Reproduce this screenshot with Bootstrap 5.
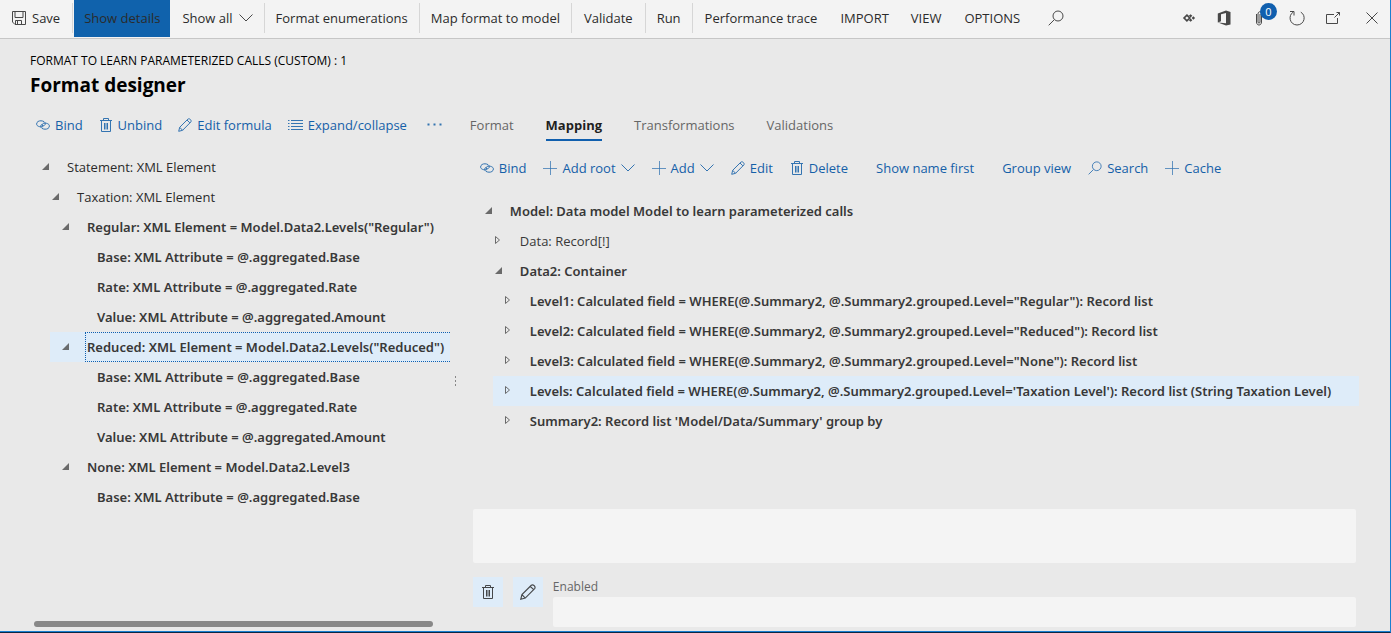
<!DOCTYPE html>
<html lang="en">
<head>
<meta charset="utf-8">
<meta name="viewport" content="width=device-width, initial-scale=1">
<title>Format designer</title>
<link href="https://cdn.jsdelivr.net/npm/bootstrap@5.3.0/dist/css/bootstrap.min.css" rel="stylesheet">
<style>
  body { font-family: "Open Sans", "Noto Sans", sans-serif; font-size: 13px; line-height: 20px; color: #2b2b2b; background: #e9e9e9; }
  button { font: inherit; color: inherit; background: none; border: 0; padding: 0; white-space: nowrap; }
  svg { display: block; flex: none; fill: none; stroke: currentColor; opacity: .85; }
  .shell { border-right: 1px solid #1a7fd0; border-bottom: 1px solid #0a2744; }
  .topbar { background: #f3f3f3; border-bottom: 1px solid #c6c6c6; height: 39px; padding-bottom: 2px; }
  .topbar .cmd { height: 30px; padding: 0 11px; display: flex; align-items: center; gap: 6px; }
  .topbar .ruled { border-right: 1px solid #d6d6d6; }
  .topbar .cmd.active { background: #1062ac; height: 37px; padding: 0 10px; margin: 0 1px; }
  .topbar .menu { padding: 0 12px; }
  .sysicons { gap: 20px; padding-right: 11px; }
  .sysicons button { position: relative; }
  .counter { position: absolute; left: 5px; top: -7px; width: 17px; height: 17px; border-radius: 50%; background: #105fae; color: #fff; font-size: 11px; line-height: 17px; text-align: center; }
  .titles { padding: 12px 30px 0; }
  .caption-line { font-size: 12px; color: #000; }
  .heading { font-size: 19px; line-height: 28px; font-weight: 700; color: #000; }
  .work { display: grid; grid-template-columns: minmax(0, 17fr) 20px minmax(0, 36fr); padding: 12px 31px 0 30px; border-bottom: 1px solid #1a7fd0; }
  .tools { color: #1560a8; gap: 16px; height: 24px; white-space: nowrap; }
  .tools button { display: flex; align-items: center; gap: 5px; }
  .tools .plain { padding-left: 11px; }
  .format-pane { padding-top: 2px; }
  .format-pane .tools { margin: 0 0 15px 6px; }
  .source-pane .tools { gap: 17px; margin: 15px 0 16px 10px; }
  .source-pane .tree { margin-left: 3px; }
  .tabs { gap: 32px; height: 30px; }
  .tabs button { height: 30px; color: #666; border-bottom: 2px solid transparent; }
  .tabs .active { font-weight: 700; color: #1f1f1f; border-color: #105fae; }
  .tree ul { list-style: none; margin: 0; padding-left: 10px; }
  .tree > ul { padding-left: 0; }
  .tree .node { display: flex; align-items: center; height: 30px; padding-left: 12px; white-space: nowrap; }
  .tree .node button { width: 23px; height: 14px; color: #555; }
  .tree .leaf { padding-left: 35px; }
  .tree .node span { padding-left: 2px; height: 30px; line-height: 30px; }
  .tree .bound { font-family: "Noto Sans", "Open Sans", sans-serif; font-weight: 600; color: #383838; }
  .tree .unbound { font-family: "Open Sans", "Noto Sans", sans-serif; font-weight: 400; }
  .tree .picked { background: #deecf9; }
  .tree .focused span { flex: 1 0 auto; border: 1px dotted #105fae; border-right: 0; padding-left: 1px; line-height: 28px; }
  .splitter { padding: 20px 0 0 4px; }
  .hbar { height: 6px; width: 95%; border-radius: 3px; background: #888; margin: 0 0 4px 4px; }
  .field { border: 0; border-radius: 2px; background: #f4f4f4; display: block; width: 100%; height: 30px; resize: none; }
  .formula { height: 54px; }
  .tile { width: 30px; height: 30px; background: #deecf9; display: flex; align-items: center; justify-content: center; }
  .lower { padding: 0 3px 4px; }
  .lower label { font-size: 12px; color: #666; }
  .lower-row { gap: 10px; margin-top: 14px; }
</style>
</head>
<body>
<svg width="0" height="0" class="position-absolute" aria-hidden="true">
  <symbol id="save" viewBox="0 0 14 14"><path d="M1 .5h12.500v13H3l-2.500-2.500V.5zM3 .5v6h8v-6M3.500 13V9.500h6V13M5.500 10v3"/></symbol>
  <symbol id="chev" viewBox="0 0 14 14"><path d="M.5 3.500 7 10l6.500-6.500"/></symbol>
  <symbol id="lens" viewBox="0 0 16 16"><circle cx="10" cy="6" r="5"/><path d="M6.300 9.700.7 15.300"/></symbol>
  <symbol id="link" viewBox="0 0 14 14"><path d="M7.200 8.600C4 9.300.6 8.300.6 6S3 2.700 5 2.800c2.400.1 4.300 1.200 4.300 3 0 1.400-1.300 1.900-2.300 1.900-.8 0-1.400-.3-1.400-1"/><path d="M6.800 5.400c3.200-.8 6.600.3 6.600 2.600s-2.400 3.300-4.400 3.200c-2.400-.1-4.300-1.200-4.300-3 0-1.300 1.200-1.900 2.300-1.900"/></symbol>
  <symbol id="bin" viewBox="0 0 14 14"><path d="M1 2.500h12M4.500 2.500V.5h5v2M2.500 2.500v11h9v-11M5.500 5v6.500M7 5v6.500M8.500 5v6.500"/></symbol>
  <symbol id="pen" viewBox="0 0 14 14"><path d="m.7 13.300 1-4L9.900 1.100c1.600-1.200 4.100 1.300 2.900 2.900L4.600 12.300zM1.700 9.300l2.900 3M9 2l2.900 2.900"/></symbol>
  <symbol id="rows" viewBox="0 0 15 14"><path d="M3 2.500h12M3 5.500h12M3 8.500h12M3 11.500h12M0 2.500h1.500M0 5.500h1.500M0 8.500h1.500M0 11.500h1.500"/></symbol>
  <symbol id="plus" viewBox="0 0 14 14"><path d="M7.500 0v14M0 7.500h14" opacity=".75"/></symbol>
  <symbol id="open" viewBox="0 0 8 8"><path d="M7 0v7H0z" fill="currentColor" stroke="none"/></symbol>
  <symbol id="shut" viewBox="0 0 8 10"><path d="M.5.500v7l4-3.500z"/></symbol>
</svg>
<div class="shell d-flex flex-column min-vh-100">
  <header class="topbar d-flex align-items-center justify-content-between">
    <nav class="d-flex align-items-center" aria-label="Actions">
      <button class="cmd menu ruled"><svg width="14" height="14"><use href="#save"/></svg>Save</button>
      <button class="cmd active">Show details</button>
      <button class="cmd ruled">Show all<svg width="14" height="14"><use href="#chev"/></svg></button>
      <button class="cmd ruled">Format enumerations</button>
      <button class="cmd ruled">Map format to model</button>
      <button class="cmd menu ruled">Validate</button>
      <button class="cmd ruled">Run</button>
      <button class="cmd menu">Performance trace</button>
      <button class="cmd">IMPORT</button>
      <button class="cmd">VIEW</button>
      <button class="cmd menu">OPTIONS</button>
      <button class="cmd menu ms-1" aria-label="Search"><svg width="16" height="16"><use href="#lens"/></svg></button>
    </nav>
    <div class="sysicons d-flex align-items-center">
      <button aria-label="Power Apps"><svg width="15" height="12" viewBox="0 0 17 14" stroke-width="2"><path d="m5.500 3.700 3.300 3.300-3.300 3.300L2.200 7z"/><path d="m9.800 2.500 2 2-2 2-2-2zM9.800 7.500l2 2-2 2-2-2zM13 5l2 2-2 2-2-2z" fill="currentColor" stroke="none"/></svg></button>
      <button aria-label="Office"><svg width="14" height="16" viewBox="0 0 14 16"><path d="M9 .5 13.500 2v12.500L9 15.500l-8-3 8 .8V3L4 4.200v7L.8 12.500v-9z" fill="currentColor" stroke="none"/></svg></button>
      <button class="ms-1" aria-label="Attachments"><svg width="14" height="16" viewBox="0 0 14 16"><path d="M1.500 4v8c0 4 5 4 5 0V4c0-3-3.500-3-3.500 0v8c0 1.500 2 1.500 2 0V4"/></svg><span class="counter">0</span></button>
      <button aria-label="Refresh"><svg width="16" height="16" viewBox="0 0 16 16"><path d="M4.200 2.200C-1 5 .3 14.800 8 15c8-.2 9.300-10 3.800-12.800M1 1.500h4v4"/></svg></button>
      <button aria-label="Open in new window"><svg width="16" height="14" viewBox="0 0 16 14"><path d="M9 3.500H1.500v9h11V7M9.500 6.500l5-5M11.500 1.500h3v3"/></svg></button>
      <button class="ms-1" aria-label="Close"><svg width="14" height="14" viewBox="0 0 14 14"><path d="m1.500 1.500 11 11m0-11-11 11"/></svg></button>
    </div>
  </header>

  <div class="titles">
    <div class="caption-line">FORMAT TO LEARN PARAMETERIZED CALLS (CUSTOM) : 1</div>
    <h1 class="heading mb-0">Format designer</h1>
  </div>

  <main class="work flex-grow-1">
    <section class="format-pane d-flex flex-column overflow-hidden">
      <div class="tools d-flex align-items-center">
        <button><svg width="14" height="14"><use href="#link"/></svg>Bind</button>
        <button><svg width="14" height="14"><use href="#bin"/></svg>Unbind</button>
        <button><svg width="14" height="14"><use href="#pen"/></svg>Edit formula</button>
        <button><svg width="15" height="14"><use href="#rows"/></svg>Expand/collapse</button>
        <button class="ms-1" aria-label="More"><svg width="15" height="14" viewBox="0 0 15 14"><path d="M.5 6.500h2M6.500 6.500h2M12.500 6.500h2" stroke-width="2"/></svg></button>
      </div>
      <div class="tree flex-grow-1">
        <ul>
          <li><div class="node"><button aria-label="Collapse"><svg width="8" height="8"><use href="#open"/></svg></button><span>Statement: XML Element</span></div>
            <ul>
              <li><div class="node"><button aria-label="Collapse"><svg width="8" height="8"><use href="#open"/></svg></button><span>Taxation: XML Element</span></div>
                <ul class="bound">
                  <li><div class="node"><button aria-label="Collapse"><svg width="8" height="8"><use href="#open"/></svg></button><span>Regular: XML Element = Model.Data2.Levels("Regular")</span></div>
                    <ul>
                      <li><div class="node leaf"><span>Base: XML Attribute = @.aggregated.Base</span></div></li>
                      <li><div class="node leaf"><span>Rate: XML Attribute = @.aggregated.Rate</span></div></li>
                      <li><div class="node leaf"><span>Value: XML Attribute = @.aggregated.Amount</span></div></li>
                    </ul>
                  </li>
                  <li><div class="node picked focused"><button aria-label="Collapse"><svg width="8" height="8"><use href="#open"/></svg></button><span>Reduced: XML Element = Model.Data2.Levels("Reduced")</span></div>
                    <ul>
                      <li><div class="node leaf"><span>Base: XML Attribute = @.aggregated.Base</span></div></li>
                      <li><div class="node leaf"><span>Rate: XML Attribute = @.aggregated.Rate</span></div></li>
                      <li><div class="node leaf"><span>Value: XML Attribute = @.aggregated.Amount</span></div></li>
                    </ul>
                  </li>
                  <li><div class="node"><button aria-label="Collapse"><svg width="8" height="8"><use href="#open"/></svg></button><span>None: XML Element = Model.Data2.Level3</span></div>
                    <ul>
                      <li><div class="node leaf"><span>Base: XML Attribute = @.aggregated.Base</span></div></li>
                    </ul>
                  </li>
                </ul>
              </li>
            </ul>
          </li>
        </ul>
      </div>
      <div class="hbar"></div>
    </section>

    <div class="splitter d-flex align-items-center"><svg width="3" height="12" viewBox="0 0 3 12" color="#777"><path d="M1.500 1v2M1.500 5v2M1.500 9v2"/></svg></div>

    <section class="source-pane d-flex flex-column">
      <div class="tabs d-flex" role="tablist">
        <button role="tab">Format</button>
        <button role="tab" class="active" aria-selected="true">Mapping</button>
        <button role="tab">Transformations</button>
        <button role="tab">Validations</button>
      </div>
      <div class="tools d-flex align-items-center">
        <button><svg width="14" height="14"><use href="#link"/></svg>Bind</button>
        <button><svg width="14" height="14"><use href="#plus"/></svg>Add root<svg width="14" height="14"><use href="#chev"/></svg></button>
        <button><svg width="14" height="14"><use href="#plus"/></svg>Add<svg width="14" height="14"><use href="#chev"/></svg></button>
        <button><svg width="14" height="14"><use href="#pen"/></svg>Edit</button>
        <button><svg width="14" height="14"><use href="#bin"/></svg>Delete</button>
        <button class="plain">Show name first</button>
        <button class="plain">Group view</button>
        <button><svg width="14" height="14"><use href="#lens"/></svg>Search</button>
        <button><svg width="14" height="14"><use href="#plus"/></svg>Cache</button>
      </div>
      <div class="tree flex-grow-1">
        <ul class="bound">
          <li><div class="node"><button aria-label="Collapse"><svg width="8" height="8"><use href="#open"/></svg></button><span>Model: Data model Model to learn parameterized calls</span></div>
            <ul>
              <li><div class="node unbound"><button aria-label="Expand"><svg width="8" height="10"><use href="#shut"/></svg></button><span>Data: Record[!]</span></div></li>
              <li><div class="node"><button aria-label="Collapse"><svg width="8" height="8"><use href="#open"/></svg></button><span>Data2: Container</span></div>
                <ul>
                  <li><div class="node"><button aria-label="Expand"><svg width="8" height="10"><use href="#shut"/></svg></button><span>Level1: Calculated field = WHERE(@.Summary2, @.Summary2.grouped.Level="Regular"): Record list</span></div></li>
                  <li><div class="node"><button aria-label="Expand"><svg width="8" height="10"><use href="#shut"/></svg></button><span>Level2: Calculated field = WHERE(@.Summary2, @.Summary2.grouped.Level="Reduced"): Record list</span></div></li>
                  <li><div class="node"><button aria-label="Expand"><svg width="8" height="10"><use href="#shut"/></svg></button><span>Level3: Calculated field = WHERE(@.Summary2, @.Summary2.grouped.Level="None"): Record list</span></div></li>
                  <li><div class="node picked"><button aria-label="Expand"><svg width="8" height="10"><use href="#shut"/></svg></button><span>Levels: Calculated field = WHERE(@.Summary2, @.Summary2.grouped.Level='Taxation Level'): Record list (String Taxation Level)</span></div></li>
                  <li><div class="node"><button aria-label="Expand"><svg width="8" height="10"><use href="#shut"/></svg></button><span>Summary2: Record list 'Model/Data/Summary' group by</span></div></li>
                </ul>
              </li>
            </ul>
          </li>
        </ul>
      </div>
      <div class="lower">
        <textarea class="field formula" aria-label="Formula"></textarea>
        <div class="lower-row d-flex">
          <button class="tile" aria-label="Delete formula"><svg width="14" height="14"><use href="#bin"/></svg></button>
          <button class="tile" aria-label="Edit formula"><svg width="16" height="16"><use href="#pen"/></svg></button>
          <div class="flex-grow-1"><label for="enabled" class="d-block">Enabled</label><input id="enabled" type="text" class="field"></div>
        </div>
      </div>
    </section>
  </main>
</div>
<script src="https://cdn.jsdelivr.net/npm/bootstrap@5.3.0/dist/js/bootstrap.bundle.min.js"></script>
</body>
</html>
